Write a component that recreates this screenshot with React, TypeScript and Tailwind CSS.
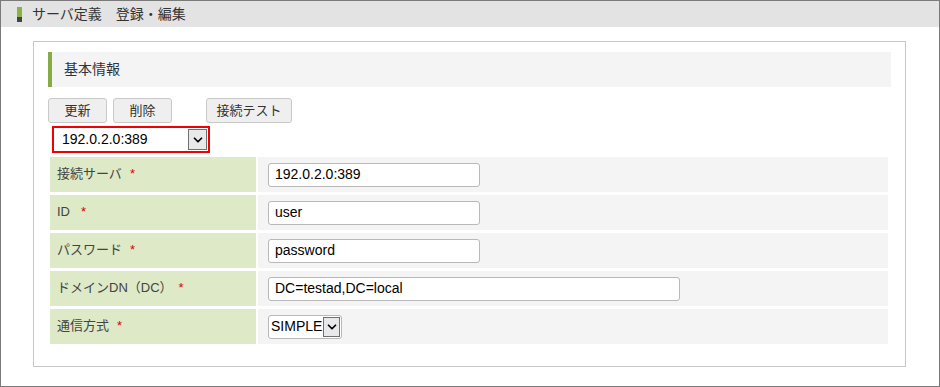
import { ChevronDown } from 'lucide-react'

const font = { fontFamily: '"Liberation Sans", Arial, "Noto Sans CJK JP", sans-serif' }

const rows = [
  { label: '接続サーバ', gap: 'ml-[8px]', value: '192.0.2.0:389', kind: 'input', w: 'w-[212px]' },
  { label: 'ID', gap: 'ml-[11px]', value: 'user', kind: 'input', w: 'w-[212px]' },
  { label: 'パスワード', gap: 'ml-[8px]', value: 'password', kind: 'input', w: 'w-[212px]' },
  { label: 'ドメインDN（DC）', gap: 'ml-[6px]', value: 'DC=testad,DC=local', kind: 'input', w: 'w-[412px]' },
  { label: '通信方式', gap: 'ml-[8px]', value: 'SIMPLE', kind: 'select', w: '' },
]

function DropBox({ className }: { className?: string }) {
  return (
    <div className={`flex items-center justify-center bg-[#e9e9e9] border border-[#707070] ${className ?? ''}`}>
      <ChevronDown size={14} strokeWidth={3} className="text-black" />
    </div>
  )
}

export default function App() {
  return (
    <div style={font} className="w-[940px] h-[387px] border border-[#7a7a7a] bg-white text-[#333] overflow-hidden">
      {/* Title bar */}
      <div className="h-[26px] bg-[#e3e3e3] flex items-center pl-[16px]">
        <div className="flex flex-col w-[5px] mr-[10px]">
          <div className="h-[10px] bg-[#8ab43e]" />
          <div className="h-[5px] bg-[#444]" />
        </div>
        <span className="text-[14px] text-[#333]">サーバ定義　登録・編集</span>
      </div>

      {/* Card */}
      <div className="ml-[32px] mt-[14px] w-[873px] h-[326px] border border-[#c8c8c8] pt-[10px] pl-[14px] pr-[14px]">
        <div className="h-[35px] flex items-center bg-[#f4f4f4] border-l-[4px] border-[#84ab45] pl-[12px] text-[14px] text-[#333]">
          基本情報
        </div>

        <div className="flex mt-[11px] text-[13px]">
          <button className="w-[59px] h-[25px] rounded-[3px] bg-[#efefef] border border-[#c9c9c9] text-[#333]">更新</button>
          <button className="w-[59px] h-[25px] ml-[6px] rounded-[3px] bg-[#efefef] border border-[#c9c9c9] text-[#333]">削除</button>
          <button className="w-[86px] h-[25px] ml-[34px] rounded-[3px] bg-[#efefef] border border-[#c9c9c9] text-[#333]">接続テスト</button>
        </div>

        <div className="mt-[3px] ml-[4px] w-[158px] h-[27px] border-[2px] border-[#f00000] flex items-center bg-white">
          <span className="flex-1 pl-[8px] text-[14px] text-black">192.0.2.0:389</span>
          <DropBox className="w-[19px] h-[21px] mr-[1px]" />
        </div>

        <div className="mt-[4px] ml-[2px] w-[838px] flex flex-col gap-[3px]">
          {rows.map((r) => (
            <div key={r.label} className="flex h-[35px] gap-[2px]">
              <div className="w-[206px] bg-[#dde9c7] pl-[7px] pt-[7px] text-[13px] text-[#444]">
                {r.label}
                <span className={`text-[#e00000] ${r.gap}`}>*</span>
              </div>
              <div className="flex-1 bg-[#f4f4f4] flex items-center pl-[10px]">
                {r.kind === 'input' ? (
                  <div className={`${r.w} h-[24px] bg-white border border-[#b9b9b9] rounded-[3px] flex items-center pl-[6px] text-[14px] text-black`}>
                    {r.value}
                  </div>
                ) : (
                  <div className="w-[74px] h-[24px] bg-white border border-[#b9b9b9] rounded-[3px] flex items-center pl-[2px] text-[14px] text-black">
                    <span className="flex-1">{r.value}</span>
                    <DropBox className="w-[17px] h-[20px] mr-[1px]" />
                  </div>
                )}
              </div>
            </div>
          ))}
        </div>
      </div>
    </div>
  )
}
